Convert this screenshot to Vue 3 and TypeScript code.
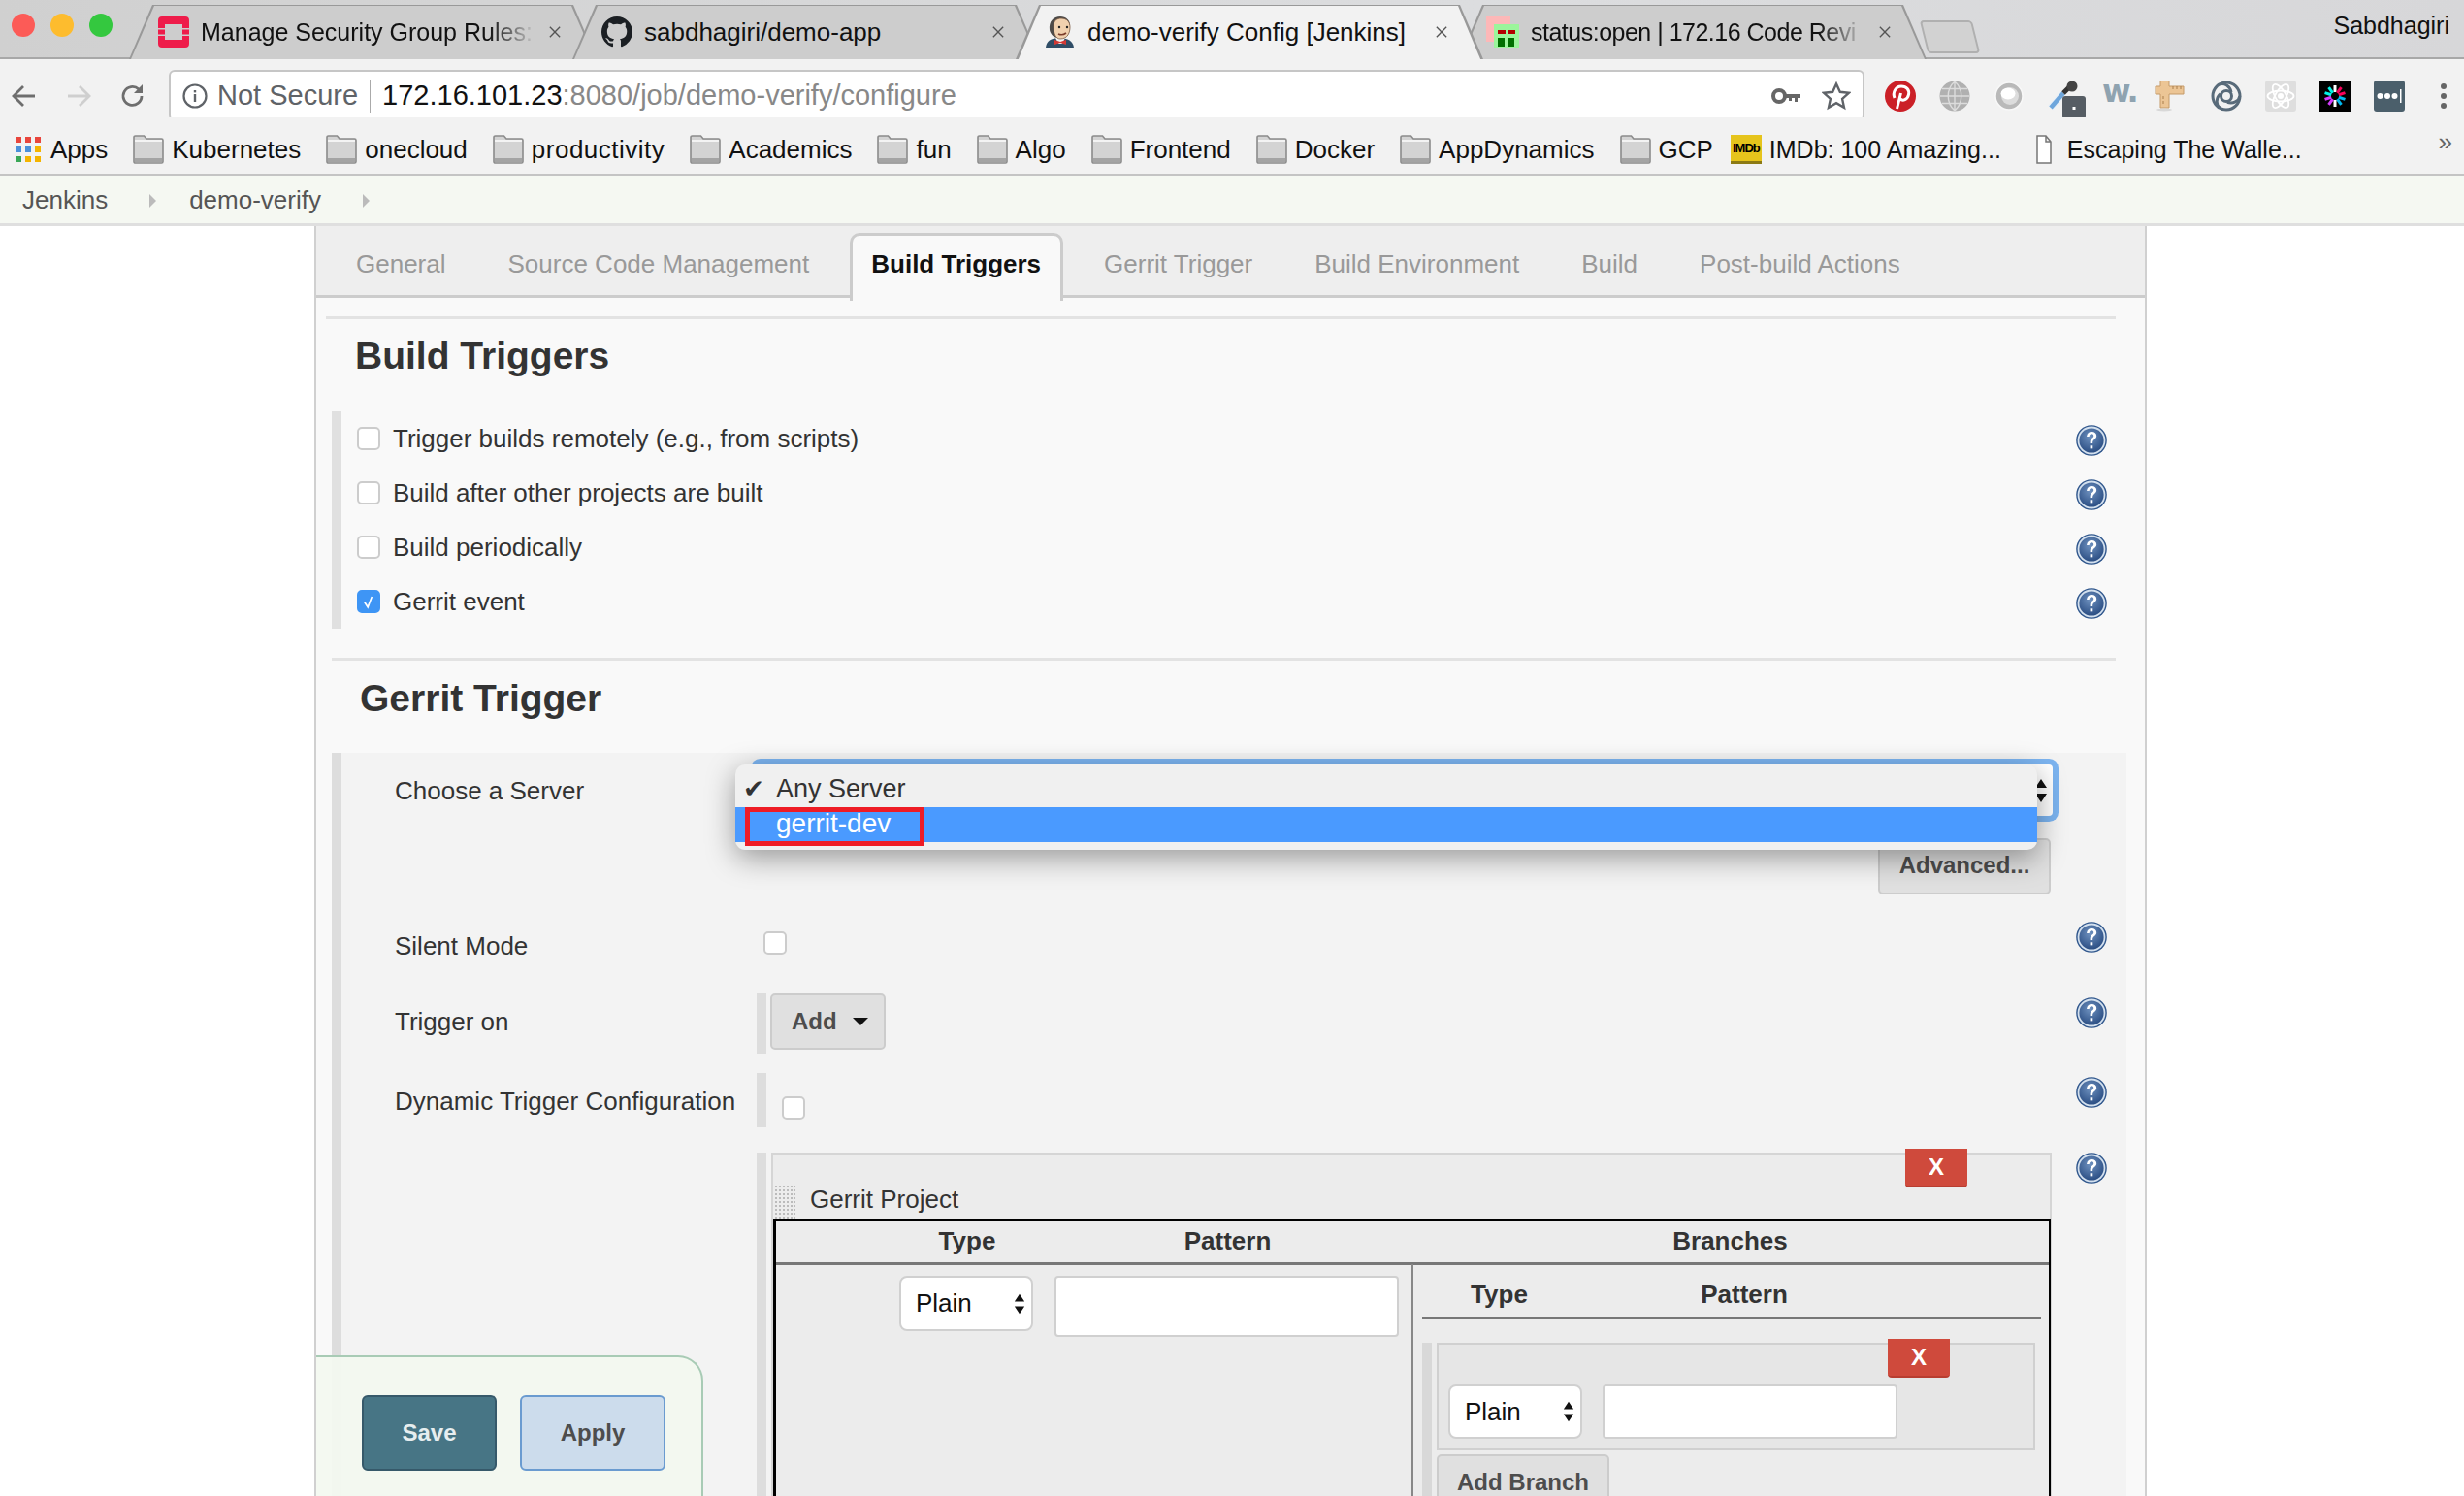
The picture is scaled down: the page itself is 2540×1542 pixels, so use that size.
<script setup lang="ts">
interface BrowserTab { title: string; icon: string; active?: boolean; fade?: boolean }

const browserTabs: BrowserTab[] = [
  { title: 'Manage Security Group Rules:', icon: 'openstack', fade: true },
  { title: 'sabdhagiri/demo-app', icon: 'github' },
  { title: 'demo-verify Config [Jenkins]', icon: 'jenkins', active: true },
  { title: 'status:open | 172.16 Code Revi', icon: 'gerrit', fade: true },
]

const bookmarks = ['Kubernetes', 'onecloud', 'productivity', 'Academics', 'fun', 'Algo', 'Frontend', 'Docker', 'AppDynamics', 'GCP']

const appColors = ['#e8453c', '#e8453c', '#e8453c', '#4a90d9', '#4a90d9', '#f4b400', '#3aa757', '#f4b400', '#f4b400']

const jwtSpokes = ['#fff', '#fb015b', '#fb015b', '#00b9f1', '#00b9f1', '#fff', '#d63aff', '#d63aff', '#00f2e6', '#00f2e6']

const configTabs = ['General', 'Source Code Management', 'Build Triggers', 'Gerrit Trigger', 'Build Environment', 'Build', 'Post-build Actions']

const triggers = [
  { label: 'Trigger builds remotely (e.g., from scripts)', checked: false },
  { label: 'Build after other projects are built', checked: false },
  { label: 'Build periodically', checked: false },
  { label: 'Gerrit event', checked: true },
]
</script>

<template>
  <div class="screen">
    <svg class="defs" width="0" height="0">
      <defs>
        <radialGradient id="helpFill" cx="45%" cy="35%" r="70%">
          <stop offset="0" stop-color="#6f92c0" />
          <stop offset="1" stop-color="#26497f" />
        </radialGradient>
        <symbol id="help" viewBox="0 0 32 32">
          <circle cx="16" cy="16" r="15.8" fill="#2f568c" />
          <circle cx="16" cy="16" r="14.400" fill="#d3e0ee" />
          <circle cx="16" cy="16" r="12.600" fill="url(#helpFill)" />
          <g transform="translate(16 15.500) scale(1.180) translate(-16 -15.500)">
            <path d="M11.800 12.500c.3-2.800 2-4.200 4.400-4.200 2.500 0 4.200 1.500 4.200 3.600 0 3-3.400 3.100-3.400 6v.6h-2.200v-.9c0-3.600 3.100-3.600 3.100-5.600 0-1-.7-1.700-1.800-1.700-1.200 0-1.900.8-2.100 2.200z" fill="#fff" />
            <rect x="14.800" y="20.400" width="2.300" height="2.600" fill="#fff" />
          </g>
        </symbol>
        <symbol id="folder" viewBox="0 0 32 30">
          <path d="M1 5V2.500C1 1.600 1.600 1 2.500 1h9L14 4h15.500c.9 0 1.500.6 1.500 1.500v22c0 .9-.6 1.500-1.500 1.500h-27C1.600 29 1 28.400 1 27.500z" fill="#d3d3d3" stroke="#8b8b8b" stroke-width="1.600" />
          <rect x="2" y="5" width="28" height="2" fill="#f3f3f3" />
          <rect x="2" y="24" width="28" height="4.500" fill="#a4a4a4" />
        </symbol>
        <symbol id="updown" viewBox="0 0 14 24">
          <path d="M7 0l6 9H1zM7 24l-6-9h12z" fill="#111" />
        </symbol>
      </defs>
    </svg>

    <header class="tabstrip">
      <div class="lights">
        <span class="light red"></span>
        <span class="light yellow"></span>
        <span class="light green"></span>
      </div>
      <div class="tabs">
        <div v-for="t in browserTabs" :key="t.icon" class="tab" :class="{ active: t.active }">
          <svg v-if="t.icon === 'openstack'" class="favicon" viewBox="0 0 32 32" fill="#ee1c4a">
            <path d="M0 4a4 4 0 0 1 4-4h24a4 4 0 0 1 4 4v8h-7V8H7v4H0z" />
            <path d="M0 28a4 4 0 0 0 4 4h24a4 4 0 0 0 4-4v-8h-7v4H7v-4H0z" />
            <rect x="0" y="13.500" width="7" height="5" />
            <rect x="25" y="13.500" width="7" height="5" />
          </svg>
          <svg v-else-if="t.icon === 'github'" class="favicon" viewBox="0 0 16 16">
            <path fill="#1b1f23" d="M8 0C3.580 0 0 3.580 0 8c0 3.540 2.290 6.530 5.470 7.590.4.07.55-.17.55-.38 0-.19-.01-.82-.01-1.490-2.010.37-2.530-.49-2.690-.94-.09-.23-.48-.94-.82-1.130-.28-.15-.68-.52-.01-.53.63-.01 1.080.58 1.230.82.72 1.210 1.870.87 2.330.66.07-.52.28-.87.51-1.070-1.780-.2-3.640-.89-3.640-3.950 0-.87.31-1.590.82-2.150-.08-.2-.36-1.020.08-2.120 0 0 .67-.21 2.200.82.64-.18 1.320-.27 2-.27.68 0 1.360.09 2 .27 1.530-1.040 2.200-.82 2.200-.82.44 1.100.16 1.920.08 2.120.51.56.82 1.270.82 2.150 0 3.070-1.870 3.750-3.650 3.950.29.25.54.73.54 1.480 0 1.070-.01 1.930-.01 2.200 0 .21.15.46.55.38A8.013 8.013 0 0016 8c0-4.420-3.580-8-8-8z" />
          </svg>
          <svg v-else-if="t.icon === 'jenkins'" class="favicon" viewBox="0 0 32 32">
            <path d="M1 33c0-7 5-11 14-11s15 4 15 11z" fill="#2f4d66" />
            <path d="M11 22h10l-3 6h-4z" fill="#f4f4f4" />
            <path d="M10 24l6 2 6-2v5l-6-2-6 2z" fill="#d33833" />
            <path d="M5 14C4 5 9 0 16 0c6 0 10 4 10 9l-9 2-3 11c-4 0-8-3-9-8z" fill="#4d4a48" />
            <path d="M9 10c0-6 4-8 8-8 6 0 9 4 9 9s-2 12-10 12c-5 0-7-6-7-13z" fill="#f0d0ae" stroke="#7a5a44" stroke-width=".8" />
            <circle cx="15" cy="11" r="1.200" fill="#222" />
            <circle cx="23" cy="11" r="1.200" fill="#222" />
            <path d="M14 18c3 1.500 6 .5 8-1" fill="none" stroke="#7a3c2a" stroke-width="1.600" />
          </svg>
          <svg v-else class="favicon gerrit-ico" viewBox="0 0 34 32">
            <rect x="0" y="0" width="25" height="26" fill="#fdb8b8" />
            <rect x="8" y="8" width="26" height="24" fill="#9bf59b" />
            <rect x="12" y="14" width="8" height="4" fill="#b30000" />
            <rect x="22" y="14" width="8" height="4" fill="#b30000" />
            <rect x="12" y="22" width="7" height="9" fill="#007000" />
            <rect x="22" y="22" width="7" height="9" fill="#007000" />
          </svg>
          <span class="tab-title" :class="{ fade: t.fade }">{{ t.title }}</span>
          <svg class="tab-close" viewBox="0 0 14 14"><path d="M1 1l12 12M13 1L1 13" stroke="#555" stroke-width="1.600" /></svg>
        </div>
        <div class="new-tab"></div>
      </div>
      <span class="profile">Sabdhagiri</span>
    </header>

    <div class="toolbar">
      <svg class="nav" viewBox="0 0 26 26"><path d="M24 13H3M12 3L2 13l10 10" fill="none" stroke="#6e6e6e" stroke-width="2.800" /></svg>
      <svg class="nav" viewBox="0 0 26 26"><path d="M2 13h21M14 3l10 10-10 10" fill="none" stroke="#cfcfcf" stroke-width="2.800" /></svg>
      <svg class="nav" viewBox="0 0 26 26"><path d="M22 13a9.500 9.500 0 1 1-3-7" fill="none" stroke="#6e6e6e" stroke-width="2.800" /><path d="M23 1v9h-9z" fill="#6e6e6e" /></svg>
      <div class="omnibox">
        <svg class="info" viewBox="0 0 26 26">
          <circle cx="13" cy="13" r="11.500" fill="none" stroke="#5f6368" stroke-width="2.200" />
          <rect x="11.800" y="11" width="2.400" height="8" fill="#5f6368" />
          <rect x="11.800" y="7" width="2.400" height="2.400" fill="#5f6368" />
        </svg>
        <span class="not-secure">Not Secure</span>
        <span class="omni-sep"></span>
        <span class="url"><b>172.16.101.23</b>:8080/job/demo-verify/configure</span>
        <svg class="omni-key" viewBox="0 0 30 18">
          <circle cx="8" cy="9" r="6" fill="none" stroke="#666" stroke-width="4" />
          <path d="M14 7h16v4h-3v4h-3v-4h-3v3h-3v-3h-4z" fill="#666" />
        </svg>
        <svg class="omni-star" viewBox="0 0 30 30">
          <path d="M15 2.500l3.800 8.300 9 1-6.700 6.100 1.900 8.900-8-4.600-8 4.600 1.900-8.900-6.700-6.100 9-1z" fill="none" stroke="#5f6368" stroke-width="2.400" />
        </svg>
      </div>
      <div class="extensions">
        <svg viewBox="0 0 32 32">
          <circle cx="16" cy="16" r="16" fill="#cb2027" />
          <path d="M12.500 29l4-16M10 18c-2.500-6 1.500-12 7-12 5.500 0 8.500 4 7.500 8.500-1 5-6 7.500-9 4" fill="none" stroke="#fff" stroke-width="3" />
        </svg>
        <svg viewBox="0 0 32 32">
          <circle cx="16" cy="16" r="15.500" fill="#b0b0b0" />
          <path d="M1 16h30M3 8.500h26M3 23.500h26M16 1v30M16 1c-9 8-9 22 0 30M16 1c9 8 9 22 0 30" fill="none" stroke="#dcdcdc" stroke-width="1.400" />
        </svg>
        <svg viewBox="0 0 32 32">
          <circle cx="16" cy="16" r="14" fill="#b9b9b9" stroke="#f8f8f8" stroke-width="1.500" />
          <circle cx="17" cy="16" r="9" fill="#dcdcdc" />
          <ellipse cx="15" cy="13.500" rx="7.500" ry="6" fill="#fff" />
        </svg>
        <svg viewBox="0 0 40 40" class="ext-tall">
          <path d="M3 28L16 13" stroke="#e8f0f8" stroke-width="7" />
          <path d="M3 28L16 13" stroke="#6ea6dc" stroke-width="4.500" />
          <path d="M16 13l8-8" stroke="#333" stroke-width="5" />
          <circle cx="25" cy="6" r="5.500" fill="#444" />
          <rect x="15" y="16" width="24" height="24" rx="3" fill="#565d64" />
          <rect x="25.500" y="27" width="3" height="3" fill="#fff" />
        </svg>
        <span class="ext-w">w.</span>
        <svg viewBox="0 0 32 32" class="ext-wood">
          <path d="M6 0h9v6h15v8H15v14H6V14H1V6h5z" fill="#ecc595" stroke="#c59a68" />
          <path d="M19 6v3M23 6v3M27 6v3M9 16v3M9 21v3" stroke="#a97f4c" />
          <ellipse cx="10" cy="30" rx="8" ry="1.500" fill="#d8d8d8" />
        </svg>
        <svg viewBox="0 0 32 32" fill="none" stroke="#596b7a" stroke-width="3">
          <circle cx="16" cy="16" r="14" />
          <circle cx="16" cy="16" r="5.500" />
          <path d="M21 12C20 6 14 2 9 4" />
          <path d="M21 12C20 6 14 2 9 4" transform="rotate(120 16 16)" />
          <path d="M21 12C20 6 14 2 9 4" transform="rotate(240 16 16)" />
        </svg>
        <svg viewBox="0 0 32 32">
          <rect width="32" height="32" rx="3" fill="#dedede" />
          <g fill="none" stroke="#fff" stroke-width="1.800">
            <ellipse cx="16" cy="16" rx="13.500" ry="5.500" />
            <ellipse cx="16" cy="16" rx="13.500" ry="5.500" transform="rotate(60 16 16)" />
            <ellipse cx="16" cy="16" rx="13.500" ry="5.500" transform="rotate(120 16 16)" />
          </g>
          <circle cx="16" cy="16" r="3" fill="#fff" />
        </svg>
        <svg viewBox="0 0 32 32">
          <rect width="32" height="32" fill="#000" />
          <path v-for="(c, i) in jwtSpokes" :key="i" d="M16 5v7" :stroke="c" stroke-width="3" :transform="`rotate(${i * 36} 16 16)`" />
        </svg>
        <svg viewBox="0 0 32 32">
          <rect width="32" height="32" rx="3" fill="#4b5f6b" />
          <circle cx="6.500" cy="16" r="3" fill="#fff" />
          <circle cx="14" cy="16" r="3" fill="#fff" />
          <circle cx="21.500" cy="16" r="3" fill="#fff" />
          <rect x="27" y="9" width="1.500" height="14" fill="#fff" />
        </svg>
        <svg viewBox="0 0 32 32" class="ext-menu">
          <circle cx="16" cy="6" r="3" fill="#666" />
          <circle cx="16" cy="16" r="3" fill="#666" />
          <circle cx="16" cy="26" r="3" fill="#666" />
        </svg>
      </div>
    </div>

    <nav class="bookmarks">
      <span class="bm apps">
        <span class="apps-grid"><i v-for="(c, i) in appColors" :key="i" :style="{ background: c }"></i></span>
        Apps
      </span>
      <span v-for="b in bookmarks" :key="b" class="bm" :class="{ wide: b === 'productivity' }">
        <svg class="folder"><use href="#folder" /></svg>
        {{ b }}
      </span>
      <span class="bm imdb-bm">
        <span class="imdb">IMDb</span>
        IMDb: 100 Amazing...
      </span>
      <span class="bm doc-bm">
        <svg class="doc" viewBox="0 0 16 30"><path d="M1 1h9l5 6v22H1zM10 1v6h5" fill="#fff" stroke="#777" stroke-width="1.500" /></svg>
        Escaping The Walle...
      </span>
      <span class="more">»</span>
    </nav>

    <div class="crumbs">
      <span>Jenkins</span>
      <i class="crumb-arrow"></i>
      <span>demo-verify</span>
      <i class="crumb-arrow"></i>
    </div>

    <main class="page">
      <div class="config-tabs">
        <span v-for="t in configTabs" :key="t" class="config-tab" :class="{ current: t === 'Build Triggers' }">{{ t }}</span>
      </div>

      <hr class="rule first" />
      <h2 class="heading">Build Triggers</h2>

      <div class="triggers">
        <div v-for="t in triggers" :key="t.label" class="trigger">
          <span class="check" :class="{ on: t.checked }">
            <svg v-if="t.checked" viewBox="0 0 24 24"><path d="M7 13l4 6 5-13" fill="none" stroke="#fff" stroke-width="2" /></svg>
          </span>
          <span>{{ t.label }}</span>
          <svg class="help"><use href="#help" /></svg>
        </div>
      </div>

      <hr class="rule second" />
      <h2 class="heading gerrit">Gerrit Trigger</h2>

      <section class="gerrit-section">
        <div class="frow server">
          <label>Choose a Server</label>
          <div class="select-wide">
            <svg class="arrows"><use href="#updown" /></svg>
            <div class="popup">
              <div class="opt"><span class="tick">✔</span>Any Server</div>
              <div class="opt hl">gerrit-dev</div>
              <span class="redbox"></span>
            </div>
          </div>
        </div>
        <div class="advanced-row"><button class="btn advanced">Advanced...</button></div>

        <div class="frow silent">
          <label>Silent Mode</label>
          <div><span class="check"></span></div>
          <svg class="help"><use href="#help" /></svg>
        </div>

        <div class="frow trigger-on">
          <label>Trigger on</label>
          <div class="barred">
            <button class="btn add">Add <i class="caret"></i></button>
          </div>
          <svg class="help"><use href="#help" /></svg>
        </div>

        <div class="frow dynamic">
          <label>Dynamic Trigger Configuration</label>
          <div class="barred"><span class="check"></span></div>
          <svg class="help"><use href="#help" /></svg>
        </div>

        <div class="frow project">
          <span></span>
          <div class="barred">
            <div class="project-box">
              <button class="x x-project">X</button>
              <div class="project-title">
                <span class="handle"></span>
                <span>Gerrit Project</span>
              </div>
              <div class="ptable">
                <div class="pcell head c1">Type</div>
                <div class="pcell head c2">Pattern</div>
                <div class="pcell head c3">Branches</div>
                <div class="pcell body c1">
                  <div class="mini-select"><span>Plain</span><svg class="arrows-sm"><use href="#updown" /></svg></div>
                </div>
                <div class="pcell body c2"><div class="text-input"></div></div>
                <div class="pcell body branches">
                  <div class="branch-head">
                    <span class="bh-type">Type</span>
                    <span class="bh-pattern">Pattern</span>
                  </div>
                  <div class="branch-bar">
                    <div class="branch-box">
                      <button class="x x-branch">X</button>
                      <div class="mini-select"><span>Plain</span><svg class="arrows-sm"><use href="#updown" /></svg></div>
                      <div class="text-input branch-input"></div>
                    </div>
                    <button class="btn add-branch">Add Branch</button>
                  </div>
                </div>
              </div>
            </div>
          </div>
          <svg class="help"><use href="#help" /></svg>
        </div>
      </section>

      <div class="savebar">
        <button class="save">Save</button>
        <button class="apply">Apply</button>
      </div>
    </main>
  </div>
</template>

<style>
html, body {
  margin: 0;
  height: 100%;
  overflow: hidden;
  background: #fff;
}
</style>

<style scoped>
.screen {
  width: 2540px;
  height: 1542px;
  overflow: hidden;
  font-family: "Liberation Sans", Arial, sans-serif;
  font-size: 26px;
  color: #333;
  background: #fff;
}
.defs { position: absolute; }

/* browser chrome */
.tabstrip {
  height: 61px;
  box-sizing: border-box;
  display: flex;
  background: linear-gradient(90deg, #d0d0d0, #dcdddf 60%, #d7d7d9);
  border-bottom: 2px solid #a8a8a8;
  position: relative;
}
.lights { display: flex; gap: 16px; padding: 14px 0 0 12px; }
.light { width: 24px; height: 24px; border-radius: 50%; }
.light.red { background: #fc5b57; }
.light.yellow { background: #fdbc2e; }
.light.green { background: #34c83f; }
.tabs { display: flex; margin-left: 17px; padding-top: 5px; height: 56px; }
.tab {
  width: 482px;
  height: 56px;
  margin-right: -25px;
  position: relative;
  display: flex;
  align-items: center;
  box-sizing: border-box;
  padding: 0 37px 0 30px;
  font-size: 26px;
  color: #111;
}
.tab::before, .tab::after {
  content: "";
  position: absolute;
  z-index: 0;
  clip-path: polygon(24px 0, calc(100% - 24px) 0, 100% 100%, 0 100%);
}
.tab::before { inset: 0; background: #999; }
.tab::after { inset: 1px 2px 0; background: #cdcdcd; }
.tab.active { z-index: 2; }
.tab.active::after { background: #f2f2f2; inset: 1px 2px -2px; }
.tab > * { position: relative; z-index: 1; }
.favicon { width: 32px; height: 32px; flex: none; margin-right: 12px; }
.gerrit-ico { margin-left: -2px; width: 34px; }
.tab-title { flex: 1; white-space: nowrap; overflow: hidden; }
.tab-title.fade {
  font-size: 25px;
  -webkit-mask-image: linear-gradient(90deg, #000 86%, transparent 100%);
  mask-image: linear-gradient(90deg, #000 86%, transparent 100%);
}
.tab:nth-child(4) .tab-title { letter-spacing: -.5px; }
.tab-close { width: 12px; height: 14px; flex: none; margin-left: 14px; }
.new-tab {
  width: 50px;
  height: 30px;
  margin: 16px 0 0 22px;
  background: #d2d2d2;
  border: 2px solid #b0b0b0;
  border-radius: 4px;
  transform: skewX(14deg);
}
.profile { position: absolute; right: 15px; top: 12px; font-size: 25px; color: #111; }

.toolbar {
  height: 60px;
  display: flex;
  align-items: center;
  background: #f2f2f2;
  padding: 15px 0 0 12px;
  box-sizing: border-box;
}
.nav { width: 26px; height: 26px; flex: none; margin-right: 30px; }
.omnibox {
  width: 1748px;
  height: 53px;
  box-sizing: border-box;
  margin-left: -6px;
  display: flex;
  align-items: center;
  background: #fff;
  border: 2px solid #c6c6c6;
  border-radius: 6px;
  padding: 0 12px;
  font-size: 29px;
}
.info { width: 26px; height: 26px; flex: none; margin-right: 10px; }
.not-secure { color: #5f6368; }
.omni-sep { width: 1px; height: 34px; background: #aaa; margin: 0 12px; }
.url { color: #888; flex: 1; }
.url b { font-weight: 400; color: #111; }
.omni-key { width: 30px; height: 18px; margin-right: 22px; }
.omni-star { width: 30px; height: 30px; }
.extensions { display: flex; align-items: center; gap: 24px; margin-left: 21px; }
.extensions svg { width: 32px; height: 32px; flex: none; }
.extensions .ext-tall { width: 40px; height: 40px; margin: 9px -8px 0 0; }
.extensions .ext-wood { margin-left: -2px; margin-right: 2px; }
.ext-w { width: 32px; font: 700 32px "DejaVu Sans", sans-serif; color: #8fa3b0; margin-top: -10px; letter-spacing: -2px; }

.bookmarks {
  height: 60px;
  box-sizing: border-box;
  border-bottom: 2px solid #c4c4c4;
  display: flex;
  align-items: center;
  gap: 26px;
  background: #f2f2f2;
  padding: 8px 0 0 16px;
  font-size: 26px;
  color: #111;
  white-space: nowrap;
  position: relative;
}
.bm { display: flex; align-items: center; gap: 8px; }
.bm.wide { letter-spacing: .5px; }
.apps { gap: 10px; }
.apps-grid {
  display: grid;
  grid-template-columns: repeat(3, 6px);
  grid-auto-rows: 6px;
  gap: 4px;
}
.folder { width: 32px; height: 30px; }
.imdb-bm { margin-left: -8px; font-size: 25px; }
.imdb {
  width: 32px;
  height: 30px;
  background: #e6c41c;
  border-bottom: 3px solid #8c7a14;
  box-sizing: border-box;
  color: #000;
  font: 700 13px/27px "Liberation Sans", sans-serif;
  letter-spacing: -1px;
  text-align: center;
  overflow: hidden;
}
.doc-bm { margin-left: 10px; font-size: 25px; }
.doc { width: 16px; height: 30px; margin-right: 8px; }
.more { position: absolute; right: 12px; top: 10px; color: #666; }

.crumbs {
  height: 52px;
  box-sizing: border-box;
  background: #f5f8f2;
  border-bottom: 3px solid #dfdfdf;
  display: flex;
  align-items: center;
  padding: 2px 0 0 23px;
  color: #555;
}
.crumb-arrow {
  width: 0;
  height: 0;
  border-left: 7px solid #bbb;
  border-top: 7px solid transparent;
  border-bottom: 7px solid transparent;
  margin: 0 34px 0 43px;
}

/* jenkins page */
.page {
  width: 1889px;
  height: 1309px;
  box-sizing: border-box;
  margin-left: 324px;
  border: solid #d0d0d0;
  border-width: 0 2px;
  background: #f9f9f9;
  position: relative;
  overflow: hidden;
}
.config-tabs {
  height: 74px;
  box-sizing: border-box;
  display: flex;
  padding-left: 9px;
  background: #eee;
  border-bottom: 3px solid #ccc;
  color: #999;
  font-size: 26px;
}
.config-tab { padding: 0 32px; line-height: 79px; white-space: nowrap; }
.config-tab.current {
  height: 67px;
  line-height: 59px;
  margin: 7px 10px 0 10px;
  padding: 0 20px 0 19px;
  background: #f9f9f9;
  border: solid #ccc;
  border-width: 3px 3px 0;
  border-radius: 10px 10px 0 0;
  color: #111;
  font-weight: 700;
}
.rule { border: none; height: 3px; background: #e3e3e3; margin: 0; }
.rule.first { margin: 19px 30px 0 10px; }
.rule.second { margin: 30px 30px 0 16px; }
.heading { margin: 0; font-size: 39px; line-height: 48px; color: #333; }
.heading:not(.gerrit) { margin: 14px 0 0 40px; }
.heading.gerrit { margin: 15px 0 0 45px; }

.triggers {
  margin: 33px 39px 0 16px;
  border-left: 10px solid #e0e0e0;
}
.trigger {
  height: 56px;
  display: flex;
  align-items: center;
  padding-left: 16px;
}
.check {
  display: block;
  width: 24px;
  height: 24px;
  box-sizing: border-box;
  background: #fff;
  border: 2px solid #ccc;
  border-radius: 5px;
  flex: none;
}
.trigger .check { margin-right: 13px; }
.check.on { background: #3e95f5; border-color: #3e95f5; }
.check.on svg { display: block; width: 20px; height: 20px; }
.help { width: 32px; height: 32px; flex: none; }
.trigger .help { margin: 4px 0 0 auto; }

.gerrit-section {
  margin: 32px 0 0 16px;
  width: 1850px;
  height: 800px;
  box-sizing: border-box;
  background: #f3f3f3;
  border-left: 10px solid #ddd;
  padding: 12px 20px 0 55px;
}
.frow {
  display: grid;
  grid-template-columns: 373px 1fr 32px;
  column-gap: 0;
}
.frow > :nth-child(2) { margin-right: 24px; }
.frow label { line-height: 30px; color: #333; }

.server { height: 53px; }
.server label { padding-top: 12px; }
.select-wide {
  grid-column: 2 / 4;
  margin-right: 56px !important;
  height: 53px;
  background: #fff;
  border-radius: 4px;
  box-shadow: 0 0 0 6px #7cb4f0;
  position: relative;
}
.arrows { position: absolute; right: 5px; top: 15px; width: 14px; height: 24px; }
.popup {
  position: absolute;
  left: -22px;
  top: 0;
  width: 1342px;
  height: 88px;
  background: #f0f0f0;
  border-radius: 10px;
  box-shadow: 0 8px 30px rgba(0, 0, 0, .38);
  overflow: visible;
  font-size: 27px;
  color: #333;
}
.opt { padding-left: 42px; height: 44px; line-height: 50px; position: relative; }
.tick { position: absolute; left: 8px; font-family: "DejaVu Sans", sans-serif; font-size: 26px; }
.opt.hl { height: 36px; line-height: 34px; background: #4a9aff; color: #fff; font-size: 28px; }
.redbox {
  position: absolute;
  left: 10px;
  top: 44px;
  width: 185px;
  height: 40px;
  box-sizing: border-box;
  border: 5px solid #ee1c25;
}
.advanced-row { display: flex; justify-content: flex-end; padding-right: 58px; margin-top: 23px; }
.btn {
  font: 700 24px "Liberation Sans", sans-serif;
  color: #4d4d4d;
  background: #e0e0e0;
  border: 2px solid #ccc;
  border-radius: 5px;
  padding: 0;
}
.advanced { width: 178px; height: 58px; padding-bottom: 2px; }

.silent { margin-top: 28px; height: 46px; }
.silent label { padding-top: 10px; }
.silent .check { margin: 10px 0 0 7px; }
.barred { border-left: 10px solid #ddd; }
.trigger-on { margin-top: 28px; }
.trigger-on label { padding-top: 14px; }
.trigger-on .barred { height: 62px; }
.trigger-on .help { margin-top: 4px; }
.add {
  display: flex;
  align-items: center;
  gap: 16px;
  width: 119px;
  height: 58px;
  margin-left: 4px;
  padding-left: 20px;
}
.caret {
  width: 0;
  height: 0;
  border-top: 8px solid #111;
  border-left: 8px solid transparent;
  border-right: 8px solid transparent;
}
.dynamic { margin-top: 20px; }
.dynamic label { padding-top: 14px; }
.dynamic .barred { height: 56px; }
.dynamic .check { margin: 24px 0 0 16px; }
.dynamic .help { margin-top: 4px; }
.project { margin-top: 26px; }
.project .barred { height: 700px; }

.project-box {
  margin-left: 5px;
  height: 700px;
  width: 1320px;
  box-sizing: border-box;
  background: #ececec;
  border: 2px solid #d5d5d5;
  position: relative;
  border-bottom: none;
}
.x {
  position: absolute;
  width: 64px;
  height: 40px;
  background: #cf4a3c;
  border: none;
  border-bottom: 2px solid #b83d30;
  border-radius: 0 0 4px 4px;
  color: #fff;
  font: 700 24px "Liberation Sans", sans-serif;
  padding: 0;
  z-index: 1;
}
.x-project { right: 85px; top: -6px; }
.x-branch { right: 86px; top: -6px; }
.project-title {
  height: 66px;
  display: flex;
  align-items: flex-end;
  gap: 15px;
  padding-left: 1px;
  color: #333;
}
.handle {
  width: 22px;
  height: 35px;
  background-image: radial-gradient(#bbb 1px, transparent 1.400px);
  background-size: 4px 4px;
}
.project-title span:last-child { line-height: 34px; position: relative; top: -3px; }
.ptable {
  width: 1317px;
  box-sizing: border-box;
  border: solid #000;
  border-width: 3px 2px 0 3px;
  display: grid;
  grid-template-columns: 276px 379px 1fr;
  grid-template-rows: 44px auto;
  height: 640px;
}
.pcell.head {
  font-weight: 700;
  text-align: center;
  line-height: 41px;
  border-bottom: 3px solid #777;
  color: #333;
  box-sizing: content-box;
  height: 42px;
}
.head.c1 { padding-left: 118px; }
.pcell.body { padding-top: 12px; }
.body.c1 { display: flex; justify-content: flex-end; padding-right: 11px; }
.body.c2 { padding: 12px 13px 0 11px; }
.mini-select {
  width: 138px;
  height: 57px;
  box-sizing: border-box;
  background: #fff;
  border: 2px solid #d0d0d0;
  border-radius: 8px;
  display: flex;
  align-items: center;
  justify-content: space-between;
  padding: 0 6px 0 15px;
  color: #111;
}
.arrows-sm { width: 12px; height: 24px; }
.text-input {
  height: 63px;
  box-sizing: border-box;
  background: #fff;
  border: 2px solid #d0d0d0;
  border-radius: 4px;
}
.branches {
  border-left: 2px solid #888;
  padding: 0 8px 0 9px !important;
}
.branch-head {
  height: 54px;
  display: flex;
  border-bottom: 3px solid #777;
  font-weight: 700;
  color: #333;
  line-height: 63px;
  text-align: center;
}
.bh-type { width: 159px; }
.bh-pattern { width: 346px; }
.branch-bar {
  margin-top: 24px;
  border-left: 10px solid #d8d8d8;
  height: 400px;
}
.branch-box {
  margin-left: 5px;
  width: 617px;
  height: 111px;
  box-sizing: border-box;
  border: 2px solid #d0d0d0;
  background: #e6e6e6;
  position: relative;
  display: flex;
  gap: 21px;
  padding: 41px 0 0 10px;
}
.branch-box .mini-select { height: 56px; }
.branch-input { width: 304px; height: 56px; }
.add-branch {
  display: block;
  width: 178px;
  height: 58px;
  margin: 4px 0 0 5px;
}

.savebar {
  position: absolute;
  left: 0;
  top: 1164px;
  width: 399px;
  height: 200px;
  box-sizing: border-box;
  background: rgba(243, 248, 240, .92);
  border: solid #a8cbb5;
  border-width: 2px 2px 0 0;
  border-radius: 0 26px 0 0;
  display: flex;
  gap: 24px;
  padding: 39px 0 0 47px;
  align-items: flex-start;
}
.savebar button {
  height: 78px;
  font: 700 24px "Liberation Sans", sans-serif;
  border-radius: 6px;
  padding: 0;
}
.save { width: 139px; background: #477585; border: 2px solid #36596a; color: #e6eef0; }
.apply { width: 150px; background: #ccdcec; border: 2px solid #6a9bd0; color: #4d4d4d; }
</style>
